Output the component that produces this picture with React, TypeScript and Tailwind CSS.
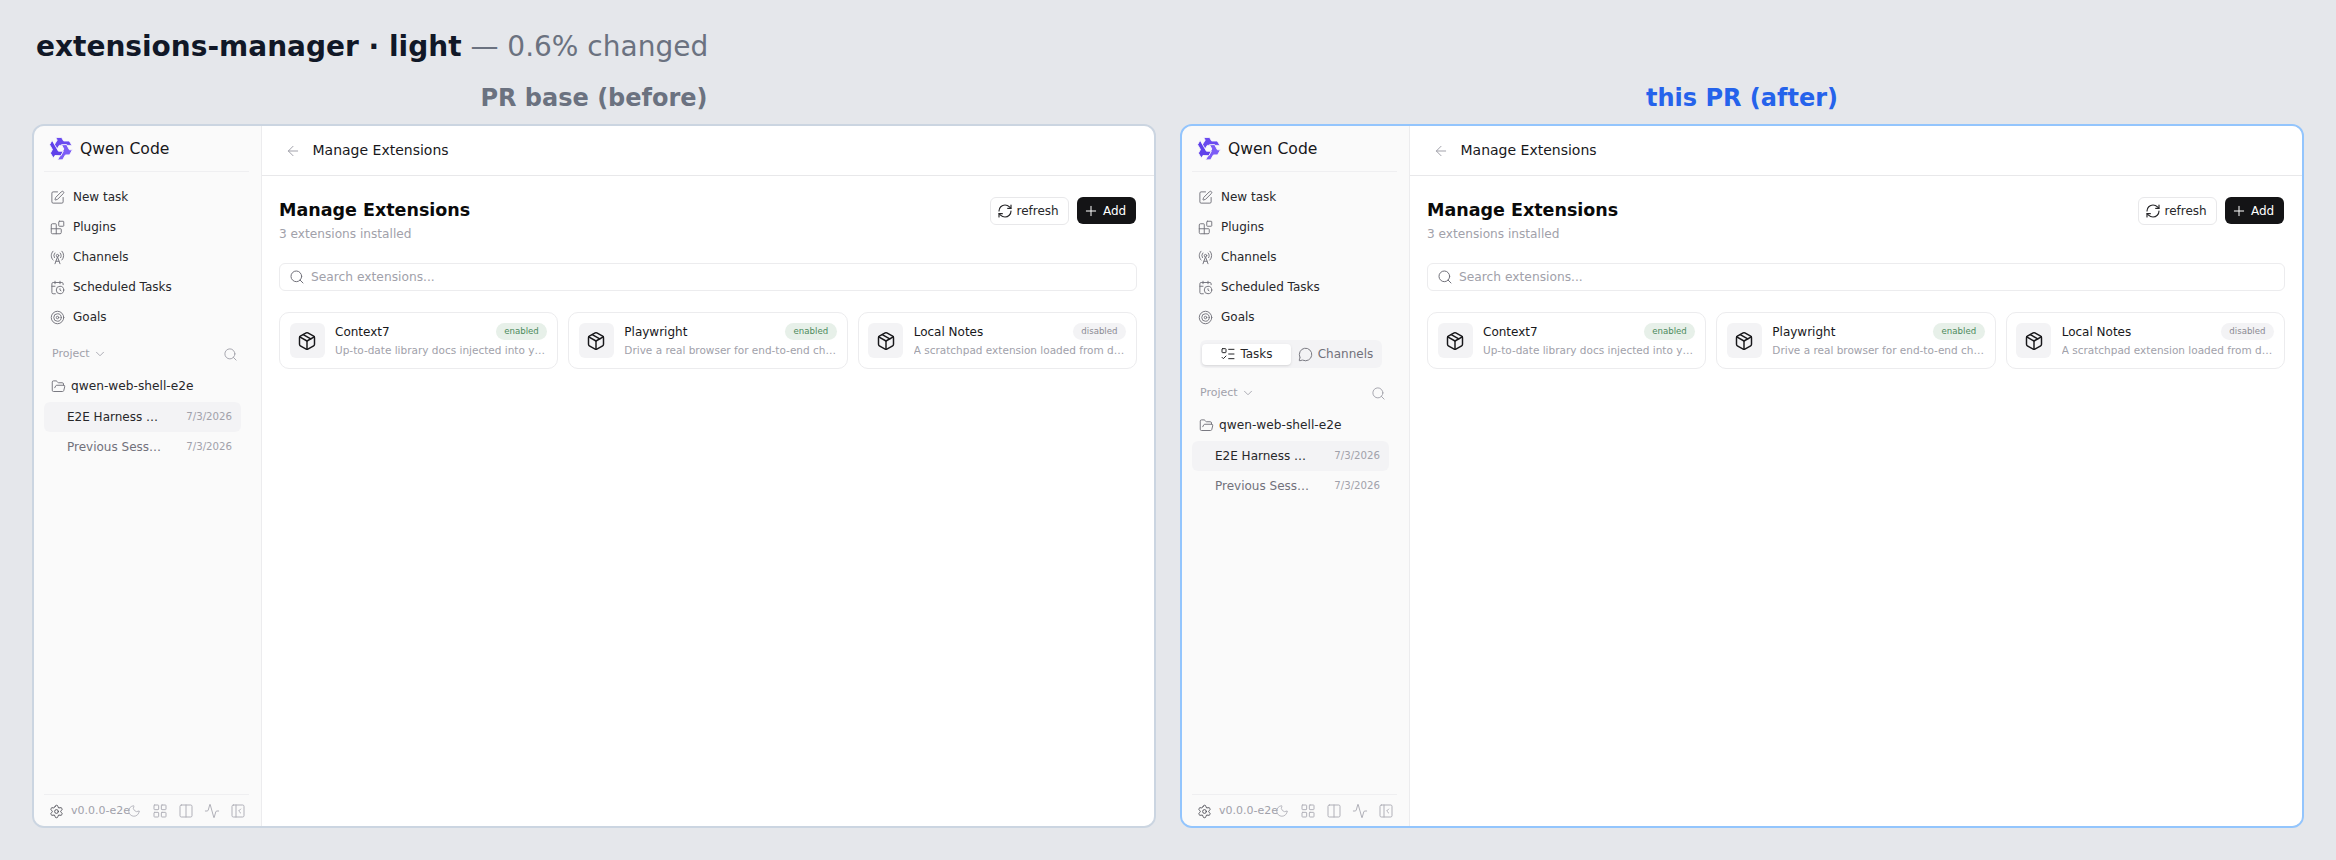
import {
  Activity,
  ArrowLeft,
  Blocks,
  CalendarClock,
  ChevronDown,
  Columns2,
  FolderOpen,
  LayoutGrid,
  ListTodo,
  MessageCircle,
  Moon,
  Package,
  PanelLeftClose,
  Plus,
  RadioTower,
  RefreshCw,
  Search,
  Settings,
  SquarePen,
  Target,
} from 'lucide-react';
import { FC } from 'react';

const navItems = [
  { label: 'New task', Icon: SquarePen },
  { label: 'Plugins', Icon: Blocks },
  { label: 'Channels', Icon: RadioTower },
  { label: 'Scheduled Tasks', Icon: CalendarClock },
  { label: 'Goals', Icon: Target },
];

const extensions = [
  {
    name: 'Context7',
    description: 'Up-to-date library docs injected into your prompts',
    enabled: true,
  },
  {
    name: 'Playwright',
    description: 'Drive a real browser for end-to-end checks and flows',
    enabled: true,
  },
  {
    name: 'Local Notes',
    description: 'A scratchpad extension loaded from disk for this project',
    enabled: false,
  },
];

const sessions = [
  { title: 'E2E Harness Session', active: true },
  { title: 'Previous Session Name', active: false },
];

// One arm of the logo, repeated at 120 degree steps around the middle.
const LOGO_ARM = 'M7.4 1.4 H13 L15 4.8 H20.4 L23 9 H10.8 L8.4 13 L5.8 8.8 L8.8 4 Z';

const QwenLogo: FC = () => (
  <svg viewBox="0 0 24 24" className="-ml-[1px] h-[25px] w-[25px] shrink-0">
    <g stroke="#fafafa" strokeWidth="0.8" strokeLinejoin="round">
      <path d={LOGO_ARM} fill="#6a4aef" />
      <path d={LOGO_ARM} fill="#7c5cf6" transform="rotate(120 12 12)" />
      <path d={LOGO_ARM} fill="#5f41ea" transform="rotate(240 12 12)" />
    </g>
  </svg>
);

const Sidebar: FC<{ withTabs?: boolean }> = ({ withTabs }) => (
  <aside className="flex w-[228px] shrink-0 flex-col border-r border-[#ececee] bg-[#fafafa]">
    <div className="ml-[10px] mr-[12px] flex h-[46px] items-center gap-[7px] border-b border-[#efeff1] pl-[5px]">
      <QwenLogo />
      <span className="pt-[2px] text-[15.6px] text-[#18181b]">Qwen Code</span>
    </div>

    <nav className="mt-[10px] flex flex-col pl-[16px]">
      {navItems.map(({ label, Icon }) => (
        <div key={label} className="flex h-[30px] items-center gap-[8px]">
          <Icon size={15} strokeWidth={1.5} className="text-[#71717a]" />
          <span className="text-[12px] text-[#27272a]">{label}</span>
        </div>
      ))}
    </nav>

    {withTabs && (
      <div className="ml-[18px] mt-[8px] flex h-[28px] w-[182px] items-center rounded-[6px] bg-[#f3f3f5] pl-[2px]">
        <div className="flex h-[21px] w-[89px] items-center justify-center gap-[4px] rounded-[4px] bg-white text-[12px] text-[#27272a] shadow-sm">
          <ListTodo size={16} strokeWidth={1.5} />
          Tasks
        </div>
        <div className="flex flex-1 items-center justify-center gap-[5px] pr-[2px] text-[12px] text-[#71717a]">
          <MessageCircle size={15} strokeWidth={1.5} />
          Channels
        </div>
      </div>
    )}

    <div
      className={`ml-[18px] flex h-[24px] w-[186px] items-center justify-between ${
        withTabs ? 'mt-[13px]' : 'mt-[10px]'
      }`}
    >
      <div className="flex items-center gap-[3px] text-[11px] text-[#a1a1aa]">
        Project
        <ChevronDown size={14} strokeWidth={1.5} />
      </div>
      <Search size={15} strokeWidth={1.5} className="text-[#a1a1aa]" />
    </div>

    <div className="ml-[17px] mt-[5px] flex h-[30px] items-center gap-[5px] text-[12.2px] text-[#27272a]">
      <FolderOpen size={15} strokeWidth={1.5} className="text-[#71717a]" />
      qwen-web-shell-e2e
    </div>

    <div className="ml-[10px] mt-[1px] flex w-[197px] flex-col">
      {sessions.map(({ title, active }) => (
        <div
          key={title}
          className={`flex h-[30px] items-center justify-between rounded-[6px] pl-[23px] pr-[9px] ${
            active ? 'bg-[#f3f3f5] text-[#27272a]' : 'text-[#71717a]'
          }`}
        >
          <span className="w-[96px] truncate text-[12px]">{title}</span>
          <span className="text-[10.2px] text-[#a1a1aa]">7/3/2026</span>
        </div>
      ))}
    </div>

    <div className="ml-[10px] mr-[12px] mt-auto flex h-[32px] items-center border-t border-[#efeff1] pl-[5px] pt-[1px]">
      <Settings size={15} strokeWidth={1.5} className="text-[#52525b]" />
      <span className="ml-[7px] w-[59px] text-[11px] text-[#a1a1aa]">
        v0.0.0-e2e
      </span>
      <Moon size={14} strokeWidth={1.5} className="-ml-[3px] text-[#b0b0b8]" />
      <div className="ml-[11px] flex items-center gap-[10px] text-[#b0b0b8]">
        <LayoutGrid size={16} strokeWidth={1.5} />
        <Columns2 size={16} strokeWidth={1.5} />
        <Activity size={16} strokeWidth={1.5} />
        <PanelLeftClose size={16} strokeWidth={1.5} />
      </div>
    </div>
  </aside>
);

const ExtensionCard: FC<(typeof extensions)[number]> = ({
  name,
  description,
  enabled,
}) => (
  <div className="flex h-[57px] items-center gap-[10.5px] rounded-[10px] border border-[#ececee] bg-white pl-[9.5px] pr-[10px]">
    <div className="flex h-[35px] w-[35px] shrink-0 items-center justify-center rounded-[6px] bg-[#f3f3f5]">
      <Package size={20} strokeWidth={1.75} className="text-[#18181b]" />
    </div>
    <div className="min-w-0 flex-1">
      <div className="flex h-[17px] items-center justify-between">
        <span className="text-[12px] text-[#18181b]">{name}</span>
        <span
          className={`flex h-[17px] items-center rounded-full px-[8.5px] text-[8.6px] ${
            enabled
              ? 'bg-[#e7f0e9] text-[#4b8a5c]'
              : 'bg-[#f3f3f5] text-[#8a8a93]'
          }`}
        >
          {enabled ? 'enabled' : 'disabled'}
        </span>
      </div>
      <p className="mt-[3px] truncate text-[10.5px] leading-[15px] text-[#a1a1aa]">
        {description}
      </p>
    </div>
  </div>
);

const MainPanel: FC = () => (
  <main className="min-w-0 flex-1 bg-white">
    <div className="flex h-[50px] items-center gap-[11.5px] border-b border-[#e8e8ea] pl-[23px]">
      <ArrowLeft size={16} strokeWidth={1.5} className="text-[#a1a1aa]" />
      <span className="text-[14px] text-[#18181b]">Manage Extensions</span>
    </div>

    <div className="px-[17px] pt-[21px]">
      <div className="flex items-start justify-between">
        <div className="pt-[1px]">
          <h2 className="text-[17.5px] font-bold leading-[24px] text-[#0a0a0a]">
            Manage Extensions
          </h2>
          <p className="mt-[4px] text-[12.15px] leading-[16px] text-[#a1a1aa]">
            3 extensions installed
          </p>
        </div>
        <div className="mr-[1px] flex items-start gap-[8px]">
          <button className="flex h-[28px] w-[79px] items-center gap-[4px] rounded-[6px] border border-[#e8e8ea] bg-white pl-[5.5px] text-[12px] text-[#27272a]">
            <RefreshCw size={16} strokeWidth={1.75} />
            refresh
          </button>
          <button className="flex h-[27px] w-[59px] items-center gap-[4px] rounded-[6px] bg-[#141416] pl-[6px] text-[12px] text-white">
            <Plus size={16} strokeWidth={1.5} />
            Add
          </button>
        </div>
      </div>

      <div className="mt-[21px] flex h-[28px] items-center gap-[6px] rounded-[6px] border border-[#ececee] bg-white pl-[9px]">
        <Search size={16} strokeWidth={1.5} className="text-[#71717a]" />
        <span className="text-[12.25px] text-[#a1a1aa]">
          Search extensions...
        </span>
      </div>

      <div className="mt-[21px] grid grid-cols-3 gap-[10px]">
        {extensions.map((extension) => (
          <ExtensionCard key={extension.name} {...extension} />
        ))}
      </div>
    </div>
  </main>
);

const Shot: FC<{ after?: boolean }> = ({ after }) => (
  <div>
    <div
      className={`mb-[10px] text-center text-[24px] font-bold leading-[32px] ${
        after ? 'text-[#2563eb]' : 'text-[#6b7280]'
      }`}
    >
      {after ? 'this PR (after)' : 'PR base (before)'}
    </div>
    <div
      className={`flex h-[704px] overflow-hidden rounded-[12px] border-2 ${
        after ? 'border-[#93c5fd]' : 'border-[#cbd5e1]'
      }`}
    >
      <Sidebar withTabs={after} />
      <MainPanel />
    </div>
  </div>
);

export default function App() {
  return (
    <div className="h-[860px] w-[2336px] overflow-hidden bg-[#e5e7eb] px-[32px] pt-[25px] font-['DejaVu_Sans',sans-serif]">
      <h1 className="mb-[13px] ml-[4px] h-[44px] text-[28px] leading-[44px] text-[#6b7280]">
        <b className="text-[#111827]">extensions-manager · light</b> — 0.6% changed
      </h1>
      <div className="grid grid-cols-2 gap-[24px]">
        <Shot />
        <Shot after />
      </div>
    </div>
  );
}
